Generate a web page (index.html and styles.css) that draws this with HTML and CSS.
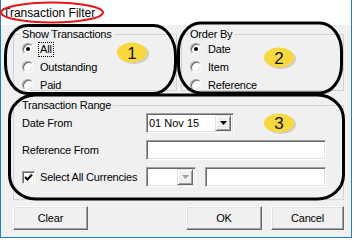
FILE: index.html
```html
<!DOCTYPE html>
<html>
<head>
<meta charset="utf-8">
<link rel="stylesheet" href="styles.css">
</head>
<body>
<div class="window">
  <div class="titlebar"><span class="title">Transaction Filter</span></div>
  <div class="client">
    <div class="top-row">
      <fieldset class="group g-show">
        <legend>Show Transactions</legend>
        <div class="group-body">
          <div class="opt"><span class="radio checked"></span><span class="lbl focus">All</span></div>
          <div class="opt"><span class="radio"></span><span class="lbl">Outstanding</span></div>
          <div class="opt"><span class="radio"></span><span class="lbl">Paid</span></div>
        </div>
      </fieldset>
      <fieldset class="group g-order">
        <legend>Order By</legend>
        <div class="group-body">
          <div class="opt"><span class="radio checked"></span><span class="lbl">Date</span></div>
          <div class="opt"><span class="radio"></span><span class="lbl">Item</span></div>
          <div class="opt"><span class="radio"></span><span class="lbl">Reference</span></div>
        </div>
      </fieldset>
    </div>
    <fieldset class="group g-range">
      <legend>Transaction Range</legend>
      <div class="range-body">
        <div class="frow">
          <span class="flabel">Date From</span>
          <div class="field combo date"><span class="ctext">01 Nov 15</span><span class="dd"><svg width="7" height="4" viewBox="0 0 7 4"><path d="M0 0h7L3.5 4z" fill="#000"/></svg></span></div>
        </div>
        <div class="frow">
          <span class="flabel">Reference From</span>
          <div class="field ref"></div>
        </div>
        <div class="frow">
          <span class="flabel chk"><span class="checkbox"><svg width="9" height="9" viewBox="0 0 9 9"><path d="M1 4 L3.5 6.5 L8 1.5" fill="none" stroke="#000" stroke-width="2"/></svg></span><span class="chk-text">Select All Currencies</span></span>
          <div class="field combo cur"><span class="ctext"></span><span class="dd disabled"><svg width="7" height="4" viewBox="0 0 7 4"><path d="M0 0h7L3.5 4z" fill="#a0a0a0"/></svg></span></div>
          <div class="field curtext"></div>
        </div>
      </div>
    </fieldset>
    <div class="buttons">
      <button class="btn btn-clear">Clear</button>
      <button class="btn btn-ok">OK</button>
      <button class="btn btn-cancel">Cancel</button>
    </div>
  </div>
</div>
<svg class="annot" width="356" height="240" viewBox="0 0 356 240">
  <ellipse cx="52" cy="12.5" rx="51" ry="10" fill="none" stroke="#e3161c" stroke-width="2"/>
  <rect x="5.5" y="25.5" width="170" height="68" rx="22" ry="30" fill="none" stroke="#000" stroke-width="3"/>
  <rect x="178.5" y="23" width="163" height="70" rx="22" ry="28" fill="none" stroke="#000" stroke-width="3"/>
  <rect x="9.5" y="95" width="334" height="104" rx="26" ry="24" fill="none" stroke="#000" stroke-width="3"/>
  <ellipse cx="134" cy="54" rx="15" ry="10" fill="#b8b8b8" opacity="0.6"/>
  <ellipse cx="132" cy="52.5" rx="15" ry="10" fill="#f7d93c"/>
  <text x="132" y="58.5" class="badge-num">1</text>
  <ellipse cx="281" cy="59" rx="15" ry="10" fill="#b8b8b8" opacity="0.6"/>
  <ellipse cx="279" cy="57.5" rx="15" ry="10" fill="#f7d93c"/>
  <text x="279" y="63.5" class="badge-num">2</text>
  <ellipse cx="281" cy="124.5" rx="15" ry="9.5" fill="#b8b8b8" opacity="0.6"/>
  <ellipse cx="279" cy="123" rx="15" ry="9.5" fill="#f7d93c"/>
  <text x="279" y="129" class="badge-num">3</text>
</svg>
</body>
</html>
```
FILE: styles.css
```css
html, body {
  margin: 0;
  padding: 0;
  background: #fff;
}
body {
  position: relative;
  width: 356px;
  height: 240px;
  overflow: hidden;
  font-family: "Liberation Sans", Arial, sans-serif;
  font-size: 11px;
  color: #000;
}
.window {
  width: 352px;
  height: 238px;
  box-sizing: border-box;
  border: 1px solid #1d7fd3;
  border-top: 0;
  background: #fff;
}
.titlebar {
  height: 25px;
  display: flex;
  align-items: center;
  padding-left: 2px;
  background: #fff;
}
.title {
  font-size: 12px;
  line-height: 14px;
}
.client {
  background: #f0f0f0;
  height: 212px;
  box-sizing: border-box;
  padding: 4px 0 0 12px;
}
.top-row {
  display: flex;
  gap: 4px;
}
.group {
  margin: 0;
  padding: 0;
  border: 1px solid #d3d3d3;
  box-sizing: border-box;
  min-width: 0;
}
.group legend {
  padding: 0 2px;
  margin-left: 6px;
  font-size: 11px;
  line-height: 11px;
  letter-spacing: -0.2px;
}
.g-show {
  width: 164px;
  height: 62px;
}
.g-order {
  width: 163px;
  height: 62px;
}
.group-body {
  padding: 0 0 0 8px;
  display: flex;
  flex-direction: column;
}
.opt {
  height: 18px;
  display: flex;
  align-items: center;
  letter-spacing: -0.2px;
}
.radio {
  width: 12px;
  height: 12px;
  box-sizing: border-box;
  border-radius: 50%;
  border: 1px solid;
  border-color: #a0a0a0 #ffffff #ffffff #a0a0a0;
  background: #fff;
  box-shadow: inset 1px 1px 0 #696969, inset -1px -1px 0 #e3e3e3;
  display: flex;
  align-items: center;
  justify-content: center;
  margin-right: 6px;
  flex: none;
}
.radio.checked::after {
  content: "";
  width: 4px;
  height: 4px;
  border-radius: 50%;
  background: #000;
}
.lbl {
  line-height: 13px;
}
.lbl.focus {
  outline: 1px dotted #000;
  outline-offset: 0;
  padding: 0 1px;
  margin-left: -1px;
}
.g-range {
  width: 331px;
  height: 100px;
  margin-top: 9px;
}
.range-body {
  padding: 2px 0 0 8px;
  display: flex;
  flex-direction: column;
  gap: 7px;
}
.frow {
  display: flex;
  align-items: center;
  height: 20px;
}
.flabel {
  width: 124px;
  flex: none;
  letter-spacing: -0.2px;
}
.flabel.chk {
  display: flex;
  align-items: center;
}
.checkbox {
  width: 13px;
  height: 13px;
  box-sizing: border-box;
  border: 1px solid;
  border-color: #a0a0a0 #ffffff #ffffff #a0a0a0;
  box-shadow: inset 1px 1px 0 #696969, inset -1px -1px 0 #e3e3e3;
  background: #fff;
  display: flex;
  align-items: center;
  justify-content: center;
  margin-right: 5px;
}
.field {
  height: 20px;
  box-sizing: border-box;
  border: 1px solid;
  border-color: #a0a0a0 #ffffff #ffffff #a0a0a0;
  box-shadow: inset 1px 1px 0 #696969, inset -1px -1px 0 #e3e3e3;
  background: #fff;
  display: flex;
  align-items: center;
}
.combo .ctext {
  flex: 1;
  padding-left: 2px;
  font-size: 11px;
}
.date {
  width: 88px;
}
.ref {
  width: 180px;
}
.cur {
  width: 50px;
}
.curtext {
  width: 121px;
  margin-left: 9px;
}
.dd {
  width: 16px;
  height: 16px;
  margin-right: 2px;
  box-sizing: border-box;
  border: 1px solid;
  border-color: #e3e3e3 #696969 #696969 #e3e3e3;
  box-shadow: inset 1px 1px 0 #fff, inset -1px -1px 0 #a0a0a0;
  background: #f0f0f0;
  display: flex;
  align-items: center;
  justify-content: center;
}
.buttons {
  display: flex;
  width: 331px;
  margin-top: 6px;
}
.btn {
  height: 24px;
  box-sizing: border-box;
  border: 1px solid;
  border-color: #ffffff #696969 #696969 #ffffff;
  box-shadow: inset -1px -1px 0 #a0a0a0, inset 1px 1px 0 #e3e3e3;
  background: #f0f0f0;
  font-family: "Liberation Sans", Arial, sans-serif;
  font-size: 11px;
  letter-spacing: -0.2px;
  color: #000;
  padding: 0;
}
.btn-clear {
  width: 75px;
}
.btn-ok {
  width: 76px;
  margin-left: auto;
}
.btn-cancel {
  width: 73px;
  margin-left: 9px;
}
.annot {
  position: absolute;
  left: 0;
  top: 0;
  pointer-events: none;
}
.badge-num {
  font-family: "Liberation Sans", Arial, sans-serif;
  font-size: 17px;
  text-anchor: middle;
  fill: #111;
}
```
